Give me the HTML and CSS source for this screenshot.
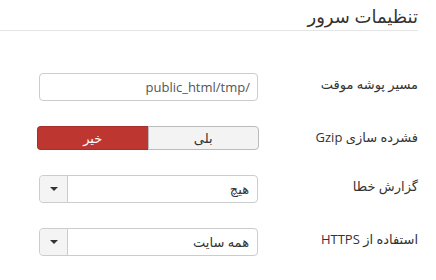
FILE: index.html
```html
<!DOCTYPE html>
<html lang="fa" dir="rtl">
<head>
    <meta charset="UTF-8">
    <meta name="viewport" content="width=device-width, initial-scale=1.0">
    <title>تنظیمات سرور</title>
    <link rel="stylesheet" href="styles.css">
</head>
<body>
    <div class="panel">
        <h2 class="panel-title">تنظیمات سرور</h2>
        <div class="form">
            <div class="row">
                <label class="row-label">مسیر پوشه موقت</label>
                <input class="text-input" type="text" value="/public_html/tmp">
            </div>
            <div class="row">
                <label class="row-label">فشرده سازی Gzip</label>
                <div class="toggle">
                    <button class="toggle-btn">بلی</button>
                    <button class="toggle-btn active">خیر</button>
                </div>
            </div>
            <div class="row">
                <label class="row-label">گزارش خطا</label>
                <div class="select">
                    <span class="select-value">هیچ</span>
                    <span class="select-arrow"><i class="caret"></i></span>
                </div>
            </div>
            <div class="row">
                <label class="row-label">استفاده از HTTPS</label>
                <div class="select">
                    <span class="select-value">همه سایت</span>
                    <span class="select-arrow"><i class="caret"></i></span>
                </div>
            </div>
        </div>
    </div>
</body>
</html>
```

FILE: styles.css
```css
body {
    margin: 0;
    background-color: #fff;
    color: #333;
    font-family: "Open Sans", "DejaVu Sans", sans-serif;
    font-size: 13px;
}
.panel {
    margin-right: 18px;
}
.panel-title {
    margin: 0;
    padding: 7px 0 5px;
    font-size: 18px;
    font-weight: normal;
    line-height: 18px;
    border-bottom: 1px solid #e5e5e5;
}
.form {
    display: flex;
    flex-direction: column;
    gap: 25px;
    padding-top: 42px;
}
.row {
    display: grid;
    grid-template-columns: 160px 219px;
    align-items: start;
}
.row-label {
    line-height: 18px;
    padding-top: 2px;
}
.text-input {
    box-sizing: border-box;
    height: 28px;
    margin: 0;
    padding: 0 7px;
    border: 1px solid #ccc;
    border-radius: 4px;
    font-family: inherit;
    font-size: 13px;
    color: #555;
    text-align: right;
    direction: rtl;
}
.toggle {
    display: flex;
    height: 24px;
    margin-left: -2px;
    margin-right: -1px;
}
.toggle-btn {
    flex: 1;
    margin: 0;
    padding: 0;
    font-family: inherit;
    font-size: 13px;
    color: #333;
    background-color: #f3f3f3;
    border: 1px solid #bbb;
    border-radius: 0 4px 4px 0;
}
.toggle-btn.active {
    color: #fff;
    background-color: #bd362f;
    border-color: #a52f29;
    border-radius: 4px 0 0 4px;
    border-right: none;
}
.select {
    box-sizing: border-box;
    display: flex;
    height: 28px;
    border: 1px solid #ccc;
    border-radius: 4px;
    background-color: #fff;
}
.select-value {
    flex: 1;
    padding: 0 8px;
    line-height: 26px;
}
.select-arrow {
    width: 27px;
    display: flex;
    align-items: center;
    justify-content: center;
    background-color: #f4f4f4;
    border-right: 1px solid #ccc;
    border-radius: 4px 0 0 4px;
}
.caret {
    width: 0;
    height: 0;
    border-top: 4px solid #333;
    border-left: 4px solid transparent;
    border-right: 4px solid transparent;
}
```
